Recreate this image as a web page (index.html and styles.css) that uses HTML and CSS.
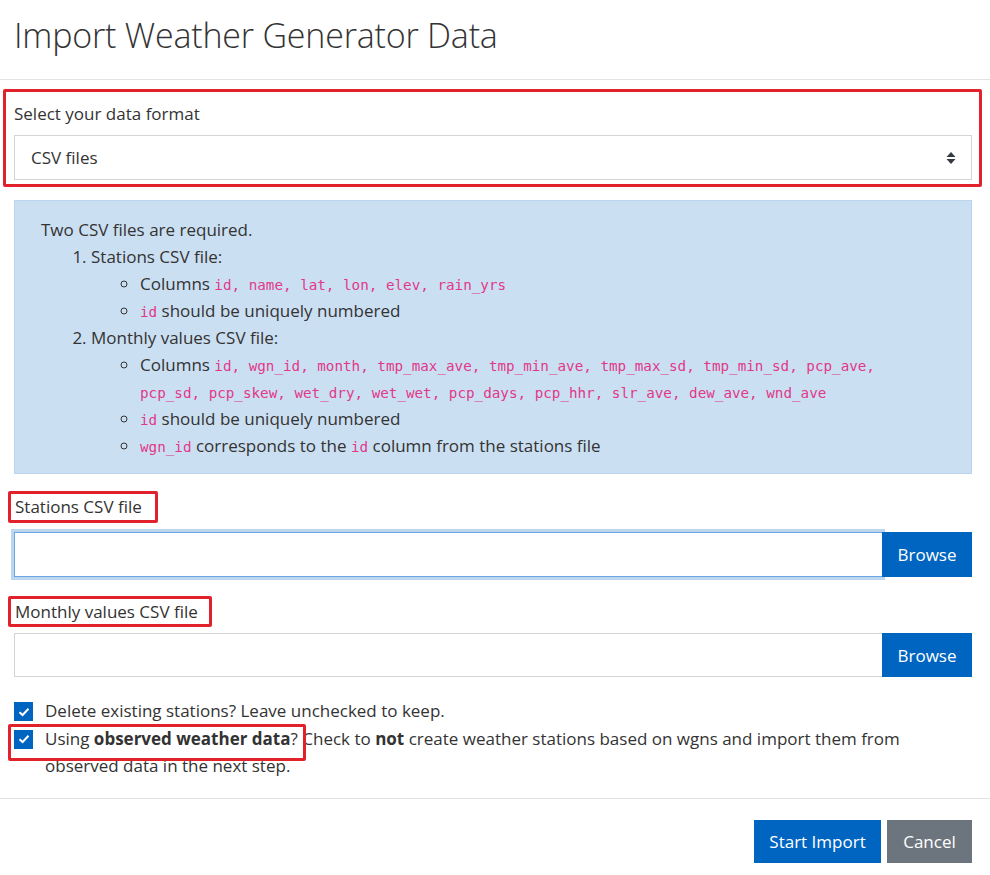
FILE: index.html
```html
<!DOCTYPE html>
<html lang="en">
<head>
<meta charset="utf-8">
<title>Import Weather Generator Data</title>
<link rel="stylesheet" href="styles.css">
</head>
<body>
<div class="modal">
  <header class="modal-header">
    <h1 class="modal-title">Import Weather Generator Data</h1>
  </header>
  <main class="modal-body">
    <div class="form-group hl-group">
      <label class="form-label">Select your data format</label>
      <div class="select">
        <span>CSV files</span>
        <svg class="select-arrow" width="10" height="14" viewBox="0 0 10 14"><path d="M5 1 L9.5 6 H0.5 Z M5 13 L9.5 8 H0.5 Z" fill="#343a40"/></svg>
      </div>
    </div>

    <div class="alert">
      <p>Two CSV files are required.</p>
      <ol>
        <li>Stations CSV file:
          <ul>
            <li>Columns <code>id, name, lat, lon, elev, rain_yrs</code></li>
            <li><code>id</code> should be uniquely numbered</li>
          </ul>
        </li>
        <li>Monthly values CSV file:
          <ul>
            <li>Columns <code>id, wgn_id, month, tmp_max_ave, tmp_min_ave, tmp_max_sd, tmp_min_sd, pcp_ave, pcp_sd, pcp_skew, wet_dry, wet_wet, pcp_days, pcp_hhr, slr_ave, dew_ave, wnd_ave</code></li>
            <li><code>id</code> should be uniquely numbered</li>
            <li><code>wgn_id</code> corresponds to the <code>id</code> column from the stations file</li>
          </ul>
        </li>
      </ol>
    </div>

    <div class="field">
      <label class="hl-label">Stations CSV file</label>
      <div class="file focused">
        <div class="file-input"></div>
        <button class="btn btn-primary btn-browse">Browse</button>
      </div>
    </div>

    <div class="field field-second">
      <label class="hl-label">Monthly values CSV file</label>
      <div class="file">
        <div class="file-input"></div>
        <button class="btn btn-primary btn-browse">Browse</button>
      </div>
    </div>

    <div class="checks">
      <div class="check">
        <span class="box"><svg width="12" height="10" viewBox="0 0 12 10"><path d="M1.5 5.2 L4.6 8 L10.5 1.8" fill="none" stroke="#fff" stroke-width="2"/></svg></span>
        <span class="check-text">Delete existing stations? Leave unchecked to keep.</span>
      </div>
      <div class="check hl-check">
        <span class="box"><svg width="12" height="10" viewBox="0 0 12 10"><path d="M1.5 5.2 L4.6 8 L10.5 1.8" fill="none" stroke="#fff" stroke-width="2"/></svg></span>
        <span class="check-text">Using <b>observed weather data</b>? Check to <b>not</b> create weather stations based on wgns and import them from observed data in the next step.</span>
      </div>
    </div>
  </main>
  <footer class="modal-footer">
    <button class="btn btn-primary btn-lg">Start Import</button>
    <button class="btn btn-secondary btn-lg">Cancel</button>
  </footer>
</div>
</body>
</html>
```
FILE: styles.css
```css
* { box-sizing: border-box; }
html, body { margin: 0; padding: 0; background: #fff; }
body {
  font-family: "Open Sans", "Noto Sans", sans-serif;
  font-size: 17px;
  line-height: 27px;
  color: #333;
  width: 990px;
  height: 875px;
  overflow: hidden;
}
.modal { display: flex; flex-direction: column; }

.modal-header {
  height: 80px;
  border-bottom: 1px solid #e3e3e3;
  padding: 13px 14px 0 14px;
}
.modal-title {
  margin: 0;
  font-weight: 300;
  font-size: 34px;
  line-height: 44px;
  color: #333;
  letter-spacing: -0.2px;
}

.modal-body { padding: 9px 18px 0 14px; }

.hl-group {
  border: 3px solid #e1222c;
  border-radius: 2px;
  margin: 0 -10px 0 -11px;
  padding: 8px 7px 4px 8px;
}
.form-label { display: block; margin-bottom: 8px; }
.select {
  height: 45px;
  border: 1px solid #d4d4d4;
  display: flex;
  align-items: center;
  justify-content: space-between;
  padding: 0 16px;
  color: #333;
}
.select-arrow { margin-right: -1px; }

.alert {
  margin-top: 13px;
  background: #cbdff2;
  border: 1px solid #bcd5ee;
  padding: 15px 32px 14px 26px;
  color: #333;
  height: 274px;
}
.alert p { margin: 0; }
.alert ol { margin: 0; padding-left: 50px; }
.alert ul { margin: 0; padding-left: 49px; list-style: circle; }
code {
  font-family: "DejaVu Sans Mono", "Liberation Mono", monospace;
  font-size: 14.25px;
  line-height: 1;
  color: #e0398a;
}

.field { margin-top: 17px; }
.field-second { margin-top: 19px; }
.hl-label {
  display: inline-block;
  border: 3px solid #e1222c;
  border-radius: 2px;
  margin-left: -6px;
  padding: 0 13px 0 4px;
  line-height: 26px;
}
.field-second .hl-label { line-height: 25px; padding-right: 11px; }
.file {
  display: flex;
  margin-top: 9px;
  height: 45px;
}
.field-second .file { margin-top: 6px; height: 44px; }
.file-input {
  flex: 1;
  border: 1px solid #d4d4d4;
  border-right: 0;
}
.file.focused .file-input {
  border: 1px solid #6aa6e4;
  border-right: 0;
  box-shadow: 0 0 0 3px #bcd6ee;
}
.btn {
  font-family: inherit;
  font-size: 17px;
  border: 0;
  color: #fff;
  cursor: pointer;
}
.btn-primary { background: #0065c1; }
.btn-secondary { background: #6c757d; }
.btn-browse { width: 90px; padding: 0; position: relative; }

.checks { margin-top: 20px; }
.check {
  display: flex;
  align-items: flex-start;
  line-height: 27.5px;
}
.box {
  flex: 0 0 19px;
  width: 19px;
  height: 19px;
  background: #0065c1;
  margin-top: 5px;
  margin-right: 12px;
  display: flex;
  align-items: center;
  justify-content: center;
}
.check-text { flex: 1; }
.hl-check { position: relative; }
.hl-check::after {
  content: "";
  position: absolute;
  left: -6px;
  top: -1px;
  width: 292px;
  height: 31px;
  border: 3px solid #e1222c;
  border-radius: 2px;
  pointer-events: none;
}

.modal-footer {
  margin-top: 18px;
  border-top: 1px solid #e3e3e3;
  padding: 21px 18px 0 0;
  display: flex;
  justify-content: flex-end;
  gap: 6px;
}
.btn-lg {
  height: 43px;
  font-size: 17px;
  padding: 0 16px;
}
.modal-footer .btn-secondary { width: 85px; padding: 0; }
.modal-footer .btn-primary { width: 127px; padding: 0; }
```
